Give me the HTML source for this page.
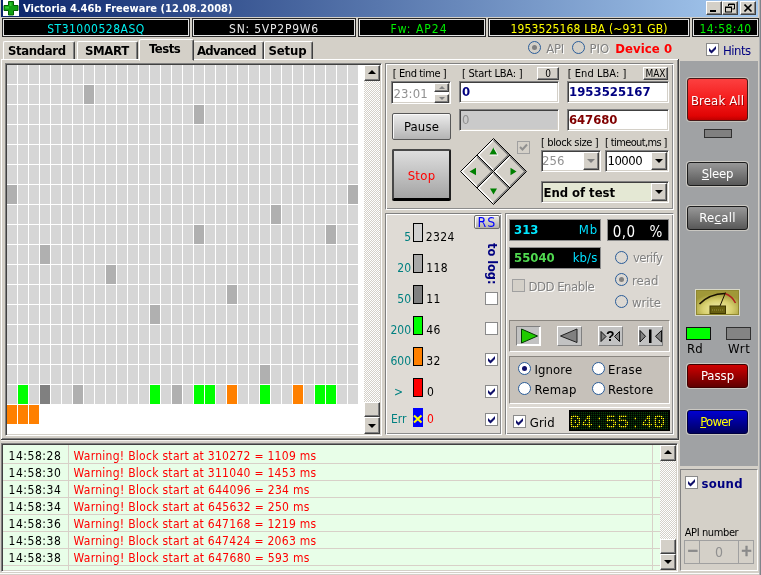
<!DOCTYPE html>
<html><head><meta charset="utf-8"><title>Victoria 4.46b Freeware (12.08.2008)</title>
<style>
html,body{margin:0;padding:0;}
body{width:761px;height:575px;overflow:hidden;background:#d4d0c8;position:relative;font-family:"DejaVu Sans Condensed","Liberation Sans",sans-serif;font-size:11px;color:#000;}
.a{position:absolute;box-sizing:border-box;white-space:nowrap;}
.t{position:absolute;white-space:nowrap;line-height:1;}
/* title */
#title{left:1px;top:0;width:757px;height:17px;background:linear-gradient(90deg,#0a246a 0%,#a6caf0 100%);}
.wb{position:absolute;top:1px;width:16px;height:14px;box-sizing:border-box;background:#d4d0c8;border:1px solid;border-color:#fff #404040 #404040 #fff;box-shadow:inset -1px -1px 0 #808080;}
.info{position:absolute;top:18px;height:19px;box-sizing:border-box;background:#000;border:1px solid #282828;box-shadow:inset 0 0 0 1px #e4e4e4;text-align:center;font-size:12px;line-height:20px;}
.tab{position:absolute;top:41px;height:19px;box-sizing:border-box;border:1px solid;border-color:#fff #404040 transparent #fff;border-radius:2px 2px 0 0;box-shadow:inset -1px 0 0 #808080;font-weight:bold;font-size:13px;line-height:17px;text-align:center;}
.sunk{border:1px solid;border-color:#808080 #fff #fff #808080;box-shadow:inset 1px 1px 0 #404040,inset -1px -1px 0 #d4d0c8;}
.grp{border:1px solid;border-color:#808080 #fff #fff #808080;box-shadow:inset 1px 1px 0 #fff, 1px 1px 0 #808080;}

.btn{background:#d4d0c8;border:1px solid;border-color:#fff #404040 #404040 #fff;box-shadow:inset -1px -1px 0 #808080;}
.edit{background:#fff;border:1px solid;border-color:#808080 #fff #fff #808080;box-shadow:inset 1px 1px 0 #404040, inset -1px -1px 0 #d4d0c8;}
.track{background:repeating-conic-gradient(#fff 0 25%,#d4d0c8 0 50%) 0 0/2px 2px;}
.arr{position:absolute;width:0;height:0;border:4px solid transparent;}
.frame{border:1px solid;border-color:#808080 #fff #fff #808080;box-shadow:inset 1px 1px 0 #fff,inset -1px -1px 0 #8c8c8c;}
.lbl{position:absolute;white-space:nowrap;font-size:11px;line-height:13px;}
.f13{font-size:13px;line-height:15px;}
.f12{font-size:12px;line-height:14px;}
.radio{position:absolute;width:13px;height:13px;box-sizing:border-box;border-radius:50%;background:#fff;border:1.4px solid #2a5c98;}
.radio.on::after{content:"";position:absolute;left:2.6px;top:2.6px;width:5px;height:5px;border-radius:50%;background:#10106a;}
.chk{position:absolute;width:13px;height:13px;box-sizing:border-box;background:#fff;border:1px solid #8a8a8a;}
.dis{color:#808080;text-shadow:1px 1px 0 #fff;}
.gbtn{border:1px solid #1c1c1c;border-radius:3px;color:#fff;text-align:center;font-size:13px;box-shadow:0 0 0 1px rgba(216,212,204,0.75);}
.led{background:#000;border:1px solid #8c8c8c;}
.grp1{border:1px solid;border-color:#8a8680 #fff #fff #8a8680;background:#c6c1ba;}
</style></head><body>
<div id="wrap" style="position:absolute;left:0;top:0;width:761px;height:575px;will-change:transform">
<!-- title bar -->
<div class="a" id="title"></div>
<div class="a" style="left:3px;top:0px;width:16px;height:16px;background:#fff"></div>
<svg class="a" style="left:3px;top:0px" width="16" height="16" viewBox="0 0 16 16"><path d="M5.5 1.5h5v4h4.5v5h-4.5v4.5h-5v-4.5h-4.5v-5h4.5z" fill="#10a010" stroke="#006000" stroke-width="1"></path><path d="M6.5 2.5h2v3.5h-2zM2 6.5h4v2h-4z" fill="#30c830"></path></svg>
<div class="t" style="left: 23px; top: 3px; font-weight: bold; font-size: 11px; color: rgb(255, 255, 255); letter-spacing: 0.03px;">Victoria 4.46b Freeware (12.08.2008)</div>
<div class="wb" style="left:706px"><div class="a" style="left:3px;top:8px;width:6px;height:2px;background:#000"></div></div>
<div class="wb" style="left:722px"><svg class="a" style="left:2px;top:1px" width="10" height="10" viewBox="0 0 10 10"><path d="M3.5 3V1h6v5H7.5" fill="none" stroke="#000" stroke-width="1"></path><path d="M3 1.5h7" stroke="#000" stroke-width="1"></path><rect x="0.5" y="4" width="6" height="5" fill="none" stroke="#000" stroke-width="1"></rect><path d="M0 4.5h7" stroke="#000" stroke-width="1"></path></svg></div>
<div class="wb" style="left:740px"><svg class="a" style="left:3px;top:2px" width="9" height="8" viewBox="0 0 9 8"><path d="M0.5 0.5l7 7M7.5 0.5l-7 7" stroke="#000" stroke-width="1.6" fill="none"></path></svg></div>
<div class="a" style="left:758px;top:0;width:3px;height:575px;background:#d4d0c8;border-right:1px solid #80848a;box-shadow:inset -1px 0 0 #b0b2b4"></div>
<div class="a" style="left:0;top:573px;width:759px;height:1px;background:#fbfbfa"></div>
<!-- info bar -->
<div class="info" style="left: 2px; width: 188px; color: rgb(0, 240, 240); letter-spacing: 0.5px;">ST31000528ASQ</div>
<div class="info" style="left: 192px; width: 164px; color: rgb(232, 232, 232); letter-spacing: 0.77px;">SN: 5VP2P9W6</div>
<div class="info" style="left: 358px; width: 128px; color: rgb(0, 240, 0); letter-spacing: 1px; padding-right:6px;">Fw: AP24</div>
<div class="info" style="left: 488px; width: 202px; color: rgb(255, 255, 0); letter-spacing: 0.15px;">1953525168 LBA (~931 GB)</div>
<div class="info" style="left: 692px; width: 67px; color: rgb(0, 240, 0); letter-spacing: 0.46px;">14:58:40</div>
<!-- tabs -->
<div class="tab" style="left: 3px; width: 72px; letter-spacing: -0.37px; text-align:left; padding-left:4px;">Standard</div>
<div class="tab" style="left: 77px; width: 61px; letter-spacing: -0.35px; text-align:left; padding-left:7px;">SMART</div>
<div class="tab" style="left: 139px; width: 55px; top: 39px; height: 22px; background: rgb(212, 208, 200); z-index: 2; letter-spacing: -0.5px; text-align:left; padding-left:9px;">Tests</div>
<div class="tab" style="left: 193px; width: 71px; letter-spacing: -0.71px; text-align:left; padding-left:3px;">Advanced</div>
<div class="tab" style="left: 264px; width: 49px; letter-spacing: -0.12px; text-align:left; padding-left:3.5px;">Setup</div>
<!-- grid -->
<div class="a sunk" id="gridbox" style="left:5px;top:63px;width:377px;height:373px;background:#fff"></div>
<div class="a" style="left:7px;top:65px;width:352px;height:340px;background:repeating-linear-gradient(90deg,#d6d6d6 0,#d6d6d6 10px,#fff 10px,#fff 11px)"></div>
<div class="a" style="left:7px;top:65px;width:352px;height:340px;background:repeating-linear-gradient(180deg,transparent 0,transparent 19px,#fff 19px,#fff 20px)"></div>
<div class="a" style="left:84px;top:85px;width:10px;height:19px;background:#b0b0b0"></div>
<div class="a" style="left:194px;top:105px;width:10px;height:19px;background:#b0b0b0"></div>
<div class="a" style="left:7px;top:185px;width:10px;height:19px;background:#b0b0b0"></div>
<div class="a" style="left:348px;top:185px;width:10px;height:19px;background:#b0b0b0"></div>
<div class="a" style="left:271px;top:205px;width:10px;height:19px;background:#b0b0b0"></div>
<div class="a" style="left:194px;top:225px;width:10px;height:19px;background:#b0b0b0"></div>
<div class="a" style="left:326px;top:225px;width:10px;height:19px;background:#b0b0b0"></div>
<div class="a" style="left:40px;top:245px;width:10px;height:19px;background:#b0b0b0"></div>
<div class="a" style="left:106px;top:265px;width:10px;height:19px;background:#b0b0b0"></div>
<div class="a" style="left:227px;top:285px;width:10px;height:19px;background:#b0b0b0"></div>
<div class="a" style="left:150px;top:305px;width:10px;height:19px;background:#b0b0b0"></div>
<div class="a" style="left:260px;top:365px;width:10px;height:19px;background:#b0b0b0"></div>
<div class="a" style="left:18px;top:385px;width:10px;height:19px;background:#00ff00"></div>
<div class="a" style="left:40px;top:385px;width:10px;height:19px;background:#808080"></div>
<div class="a" style="left:73px;top:385px;width:10px;height:19px;background:#b0b0b0"></div>
<div class="a" style="left:150px;top:385px;width:10px;height:19px;background:#00ff00"></div>
<div class="a" style="left:172px;top:385px;width:10px;height:19px;background:#b0b0b0"></div>
<div class="a" style="left:194px;top:385px;width:10px;height:19px;background:#00ff00"></div>
<div class="a" style="left:205px;top:385px;width:10px;height:19px;background:#00ff00"></div>
<div class="a" style="left:227px;top:385px;width:10px;height:19px;background:#ff8000"></div>
<div class="a" style="left:260px;top:385px;width:10px;height:19px;background:#00ff00"></div>
<div class="a" style="left:293px;top:385px;width:10px;height:19px;background:#ff8000"></div>
<div class="a" style="left:315px;top:385px;width:10px;height:19px;background:#00ff00"></div>
<div class="a" style="left:326px;top:385px;width:10px;height:19px;background:#00ff00"></div>
<div class="a" style="left:7px;top:405px;width:10px;height:19px;background:#ff8000"></div>
<div class="a" style="left:18px;top:405px;width:10px;height:19px;background:#ff8000"></div>
<div class="a" style="left:29px;top:405px;width:10px;height:19px;background:#ff8000"></div>
<div class="a" style="left:40px;top:405px;width:324px;height:19px;background:#fff"></div>

<!-- grid scrollbar -->
<div class="a track" style="left:364px;top:65px;width:16px;height:369px"></div>
<div class="a btn" style="left:364px;top:65px;width:16px;height:16px"><div class="arr" style="left:3px;top:0px;border-bottom-color:#000"></div></div>
<div class="a btn" style="left:364px;top:402px;width:16px;height:15px"></div>
<div class="a btn" style="left:364px;top:417px;width:16px;height:17px"><div class="arr" style="left:3px;top:6px;border-top-color:#000"></div></div>
<!-- tab page top line -->
<div class="a" style="left:1px;top:59px;width:677px;height:1px;background:#fff"></div>
<!-- panel 1 -->
<div class="a frame" style="left:385px;top:63px;width:289px;height:147px"></div>
<div class="lbl" style="left: 392.8px; top: 67px; letter-spacing: -0.4px;">[ End time ]</div>
<div class="a edit" style="left:391px;top:81px;width:60px;height:23px"></div>
<div class="lbl f13" style="left: 393.5px; top: 86px; color: rgb(144, 144, 144); letter-spacing: 0.12px;">23:01</div>
<div class="a btn" style="left:434px;top:83px;width:15px;height:9px"><div class="arr" style="left:4px;top:-1px;border-width:3px;border-bottom-color:#808080"></div></div>
<div class="a btn" style="left:434px;top:94px;width:15px;height:9px"><div class="arr" style="left:4px;top:2px;border-width:3px;border-top-color:#808080"></div></div>
<div class="lbl" style="left: 462px; top: 67px; letter-spacing: -0.23px;">[ Start LBA: ]</div>
<div class="a btn" style="left:537px;top:67px;width:22px;height:13px;font-size:10px;line-height:11px;text-align:center">0</div>
<div class="a edit" style="left:459px;top:81px;width:100px;height:22px"></div>
<div class="lbl f13" style="left:462px;top:84px;color:#000080;font-weight:bold">0</div>
<div class="a edit" style="left:459px;top:109px;width:100px;height:22px;background:#cacaca"></div>
<div class="lbl f13" style="left:462px;top:112px;color:#909090;">0</div>
<div class="lbl" style="left: 567.7px; top: 67px; letter-spacing: 0.05px;">[ End LBA: ]</div>
<div class="a btn" style="left:643px;top:67px;width:25px;height:13px;font-size:10px;line-height:11px;text-align:center">MAX</div>
<div class="a edit" style="left:567px;top:81px;width:102px;height:22px"></div>
<div class="lbl f13" style="left: 569px; top: 84px; color: rgb(0, 0, 128); font-weight: bold; letter-spacing: 0.02px;">1953525167</div>
<div class="a edit" style="left:567px;top:109px;width:102px;height:22px"></div>
<div class="lbl f13" style="left: 569px; top: 112px; color: rgb(128, 0, 0); font-weight: bold; letter-spacing: -0.08px;">647680</div>
<div class="a" style="left:392px;top:113px;width:59px;height:27px;background:linear-gradient(#ececec,#b4b4b4);border:1px solid #585858;border-radius:2px;box-shadow:inset 1px 1px 0 #fafafa;text-align:center;font-size:13px;line-height:25px;letter-spacing:0.17px;">Pause</div>
<div class="a" style="left:392px;top:149px;width:59px;height:52px;background:linear-gradient(#dedede,#a4a4a4);border:2px solid;border-color:#484848 #202020 #000 #484848;border-bottom-width:3px;border-radius:2px;text-align:center;font-size:13px;line-height:50px;color:#ff0000;letter-spacing:0.27px;">Stop</div>
<div class="lbl" style="left: 541px; top: 136px; letter-spacing: -0.38px;">[ block size ]</div>
<div class="lbl" style="left: 605px; top: 136px; letter-spacing: -0.62px;">[ timeout,ms ]</div>
<div class="a edit" style="left:541px;top:150px;width:60px;height:22px"></div>
<div class="lbl f13" style="left: 542px; top: 153px; color: rgb(144, 144, 144); letter-spacing: 0px;">256</div>
<div class="a btn" style="left:583px;top:152px;width:16px;height:18px"><div class="arr" style="left:3px;top:6px;border-top-color:#808080"></div></div>
<div class="a edit" style="left:605px;top:150px;width:64px;height:22px"></div>
<div class="lbl f13" style="left: 607.4px; top: 153px; letter-spacing: -0.45px;">10000</div>
<div class="a btn" style="left:651px;top:152px;width:16px;height:18px"><div class="arr" style="left:3px;top:6px;border-top-color:#000"></div></div>
<div class="a edit" style="left:541px;top:181px;width:128px;height:22px;background:#e4e8d4"></div>
<div class="lbl f13" style="left: 543.5px; top: 185px; font-weight: bold; letter-spacing: -0.05px;">End of test</div>
<div class="a btn" style="left:651px;top:183px;width:16px;height:18px"><div class="arr" style="left:3px;top:6px;border-top-color:#000"></div></div>
<div class="chk" style="left:517px;top:141px;border-color:#a0a0a0;background:#d4d0c8"></div>

<!-- diamond -->
<svg class="a" style="left:458px;top:137px" width="72" height="70" viewBox="0 0 72 70"><g transform="translate(35.5,34.5)"><polygon points="0,-33.0 16.5,-16.5 0,0.0 -16.5,-16.5" fill="#d4d0c8" stroke="#000" stroke-width="1"></polygon><polyline points="0,-31.4 -14.9,-16.5 0,-1.5999999999999996" fill="none" stroke="#fff" stroke-width="1.3"></polyline><polyline points="0,-31.4 14.9,-16.5 0,-1.5999999999999996" fill="none" stroke="#707070" stroke-width="1.3"></polyline><polygon points="-16.5,-16.5 0.0,0 -16.5,16.5 -33.0,0" fill="#d4d0c8" stroke="#000" stroke-width="1"></polygon><polyline points="-16.5,-14.9 -31.4,0 -16.5,14.9" fill="none" stroke="#fff" stroke-width="1.3"></polyline><polyline points="-16.5,-14.9 -1.5999999999999996,0 -16.5,14.9" fill="none" stroke="#707070" stroke-width="1.3"></polyline><polygon points="16.5,-16.5 33.0,0 16.5,16.5 0.0,0" fill="#d4d0c8" stroke="#000" stroke-width="1"></polygon><polyline points="16.5,-14.9 1.5999999999999996,0 16.5,14.9" fill="none" stroke="#fff" stroke-width="1.3"></polyline><polyline points="16.5,-14.9 31.4,0 16.5,14.9" fill="none" stroke="#707070" stroke-width="1.3"></polyline><polygon points="0,0.0 16.5,16.5 0,33.0 -16.5,16.5" fill="#d4d0c8" stroke="#000" stroke-width="1"></polygon><polyline points="0,1.5999999999999996 -14.9,16.5 0,31.4" fill="none" stroke="#fff" stroke-width="1.3"></polyline><polyline points="0,1.5999999999999996 14.9,16.5 0,31.4" fill="none" stroke="#707070" stroke-width="1.3"></polyline><polygon points="0,-24 4,-17 -4,-17" fill="#008000"></polygon><polygon points="0,23 3.5,17 -3.5,17" fill="#008000"></polygon><polygon points="-24,0 -17.5,-3.7 -17.5,3.7" fill="#008000"></polygon><polygon points="23,0 17,-3.7 17,3.7" fill="#008000"></polygon><path d="M-4,-16.3 h8.5 l-4,-7" fill="none" stroke="#fff" stroke-width="0.8"></path></g></svg>
<svg class="a" style="left:519px;top:143px" width="9" height="9" viewBox="0 0 9 9"><path d="M1 4 L3.5 6.5 L8 1.5" fill="none" stroke="#909090" stroke-width="2"></path></svg>
<!-- panel 2 legend -->
<div class="a frame" style="left:385px;top:213px;width:117px;height:222px;background:#dfdbd5"></div>
<div class="a" style="left: 474px; top: 215px; width: 26px; height: 14px; border: 1px solid rgb(108, 108, 108); border-radius: 2px; background: linear-gradient(rgb(236, 235, 230), rgb(180, 176, 168)); box-shadow: rgb(250, 250, 250) 1px 1px 0px inset; color: rgb(0, 0, 255); font-size: 14px; line-height: 12px; text-align: center; letter-spacing: 1.2px;">RS</div>
<div class="lbl f12" style="left:386px;width:25px;text-align:right;top:230px;color:#008080">5</div><div class="a" style="left:413px;top:223px;width:10px;height:19px;background:#d0d0d0;border:1px solid #000"></div><div class="lbl f12" style="left: 425.7px; top: 230px; letter-spacing: 0.43px;">2324</div>
<div class="lbl f12" style="left:386px;width:25px;text-align:right;top:261px;color:#008080">20</div><div class="a" style="left:413px;top:254px;width:10px;height:19px;background:#a8a8a8;border:1px solid #000"></div><div class="lbl f12" style="left: 426.3px; top: 261px; letter-spacing: 0.35px;">118</div>
<div class="lbl f12" style="left:386px;width:25px;text-align:right;top:292px;color:#008080">50</div><div class="a" style="left:413px;top:285px;width:10px;height:19px;background:#808080;border:1px solid #000"></div><div class="lbl f12" style="left: 426.3px; top: 292px; letter-spacing: 0.4px;">11</div>
<div class="lbl f12" style="left:386px;width:25px;text-align:right;top:323px;color:#008080">200</div><div class="a" style="left:413px;top:316px;width:10px;height:19px;background:#00ff00;border:1px solid #000"></div><div class="lbl f12" style="left: 426.3px; top: 323px; letter-spacing: 0.4px;">46</div>
<div class="lbl f12" style="left:386px;width:25px;text-align:right;top:354px;color:#008080">600</div><div class="a" style="left:413px;top:347px;width:10px;height:19px;background:#ff8000;border:1px solid #000"></div><div class="lbl f12" style="left: 426.3px; top: 354px; letter-spacing: 0.4px;">32</div>
<div class="lbl f12" style="left:394px;top:385px;color:#008080">&gt;</div><div class="a" style="left:413px;top:378px;width:10px;height:19px;background:#ff0000;border:1px solid #000"></div><div class="lbl f12" style="left:427px;top:385px">0</div>
<div class="lbl f12" style="left: 391px; top: 412px; color: rgb(0, 128, 128); letter-spacing: 0px;">Err</div>
<div class="a" style="left:413px;top:408px;width:10px;height:19px;background:#0000ff"></div>
<svg class="a" style="left:413px;top:414px" width="10" height="10" viewBox="0 0 10 10"><path d="M1 1.5 L8.5 8.5 M8.5 1.5 L1 8.5" stroke="#ffff00" stroke-width="2" fill="none"></path></svg>
<div class="lbl f12" style="left:427px;top:412px;color:#ff0000">0</div>
<div class="lbl f12" style="left:485px;top:243px;color:#000080;font-weight:bold;font-size:12.6px;transform-origin:0 0;transform:translate(14px,0) rotate(90deg)">to log:</div>
<div class="chk" style="left:485px;top:292px"></div>
<div class="chk" style="left:485px;top:322px"></div>
<div class="chk" style="left:485px;top:353px"></div><svg class="a" style="left:487px;top:355px" width="9" height="9" viewBox="0 0 9 9"><path d="M1 3 L3.5 5.5 L8 1 L8 4 L3.5 8.5 L1 6 Z" fill="#10106a"></path></svg>
<div class="chk" style="left:485px;top:385px"></div><svg class="a" style="left:487px;top:387px" width="9" height="9" viewBox="0 0 9 9"><path d="M1 3 L3.5 5.5 L8 1 L8 4 L3.5 8.5 L1 6 Z" fill="#10106a"></path></svg>
<div class="chk" style="left:485px;top:413px"></div><svg class="a" style="left:487px;top:415px" width="9" height="9" viewBox="0 0 9 9"><path d="M1 3 L3.5 5.5 L8 1 L8 4 L3.5 8.5 L1 6 Z" fill="#10106a"></path></svg>
<!-- panel 3 -->
<div class="a frame" style="left:505px;top:213px;width:169px;height:222px;background:#dcd8d2"></div>
<div class="a led" style="left:509px;top:219px;width:92px;height:22px"></div>
<div class="lbl f13" style="left: 514px; top: 222px; color: rgb(0, 232, 255); font-weight:bold; letter-spacing: 0px;">313</div>
<div class="lbl f13" style="left: 578.7px; top: 222px; color: rgb(0, 224, 255); letter-spacing: 0.9px;">Mb</div>
<div class="a led" style="left:607px;top:219px;width:62px;height:22px"></div>
<div class="lbl" style="left: 612.7px; top: 224px; color: rgb(255, 255, 255); font-size: 15px; line-height: 17px; letter-spacing: 0.5px;">0,0</div>
<div class="lbl" style="left: 649.5px; top: 224px; color: rgb(255, 255, 255); font-size: 15px; line-height: 17px;">%</div>
<div class="a led" style="left:509px;top:247px;width:92px;height:22px"></div>
<div class="lbl f13" style="left: 514px; top: 250px; color: rgb(80, 216, 80); font-weight:bold; letter-spacing: 0px;">55040</div>
<div class="lbl f13" style="left: 572.7px; top: 250px; color: rgb(0, 224, 255); letter-spacing: 0.1px;">kb/s</div>
<div class="chk" style="left:512px;top:279px;border-color:#a0a0a0;background:#d4d0c8"></div>
<div class="lbl f13 dis" style="left: 528.5px; top: 279px; letter-spacing: -0.5px;">DDD Enable</div>
<div class="radio" style="left:615px;top:251px;background:#dcd8d2"></div><div class="lbl f13 dis" style="left: 633px; top: 250px; letter-spacing: -0.6px;">verify</div>
<div class="radio" style="left:615px;top:273px;background:#dcd8d2"></div><div class="a" style="left:619px;top:277px;width:5px;height:5px;border-radius:50%;background:#808080"></div><div class="lbl f13 dis" style="left: 632px; top: 273px; letter-spacing: 0px;">read</div>
<div class="radio" style="left:615px;top:295px;background:#dcd8d2"></div><div class="lbl f13 dis" style="left: 632px; top: 295px; letter-spacing: -0.12px;">write</div>
<div class="a grp1" style="left:509px;top:320px;width:161px;height:32px"></div>
<div class="a" style="left:516px;top:326px;width:25px;height:20px;background:#c2c2c2;border:1px solid;border-color:#808080 #fff #fff #808080;box-shadow:inset -1px -1px 0 #fff"></div>
<div class="a" style="left:557px;top:326px;width:25px;height:20px;background:#c2c2c2;border:1px solid;border-color:#fff #808080 #808080 #fff"></div>
<div class="a" style="left:598px;top:326px;width:25px;height:20px;background:#c2c2c2;border:1px solid;border-color:#fff #808080 #808080 #fff"></div>
<div class="a" style="left:638px;top:326px;width:25px;height:20px;background:#c2c2c2;border:1px solid;border-color:#fff #808080 #808080 #fff"></div>
<svg class="a" style="left:516px;top:326px" width="148" height="20" viewBox="0 0 148 20">
<polygon points="5.5,3 21.5,10 5.5,17" fill="#20cc00" stroke="#003800" stroke-width="1"></polygon>
<polygon points="61,3 44.5,10 61,16.5" fill="#808080" stroke="#202020" stroke-width="1"></polygon>
<polygon points="85,5.5 90,10.5 85,15.5" fill="#808080" stroke="#101010" stroke-width="1"></polygon>
<polygon points="103.5,5.5 98.5,10.5 103.5,15.5" fill="#808080" stroke="#101010" stroke-width="1"></polygon>
<text x="94.2" y="15.2" font-size="14" font-weight="bold" text-anchor="middle" font-family="Liberation Sans, sans-serif">?</text>
<polygon points="124,4.5 129.5,10.3 124,16" fill="#808080" stroke="#101010" stroke-width="1"></polygon>
<polygon points="145.5,4.5 139.5,10.3 145.5,16" fill="#808080" stroke="#101010" stroke-width="1"></polygon>
<rect x="133" y="3.5" width="2.5" height="13.5" fill="#000"></rect>
</svg>
<div class="a grp1" style="left:509px;top:356px;width:161px;height:48px"></div>
<div class="radio on" style="left:518px;top:362px"></div><div class="lbl f13" style="left: 534.5px; top: 362px; letter-spacing: 0.1px;">Ignore</div>
<div class="radio" style="left:518px;top:382px"></div><div class="lbl f13" style="left: 534.5px; top: 382px; letter-spacing: 0.28px;">Remap</div>
<div class="radio" style="left:592px;top:362px"></div><div class="lbl f13" style="left: 608px; top: 362px; letter-spacing: 0.38px;">Erase</div>
<div class="radio" style="left:592px;top:382px"></div><div class="lbl f13" style="left: 608px; top: 382px; letter-spacing: 0.17px;">Restore</div>
<div class="a" style="left:509px;top:407px;width:161px;height:1px;background:#fff"></div>
<div class="chk" style="left:513px;top:415px"></div><svg class="a" style="left:515px;top:417px" width="9" height="9" viewBox="0 0 9 9"><path d="M1 3 L3.5 5.5 L8 1 L8 4 L3.5 8.5 L1 6 Z" fill="#10106a"></path></svg>
<div class="lbl f13" style="left: 529.8px; top: 415px; letter-spacing: 0.07px;">Grid</div>
<div class="a" style="left:569px;top:410px;width:101px;height:21px;background:#000"></div>
<div class="lbl" style="left:569px;top:413px;width:99px;height:17px;overflow:hidden;color:#ffff00;font-family:'Liberation Mono','DejaVu Sans Mono',monospace;font-size:20px;line-height:19px;letter-spacing:0px;font-weight:normal;background:#000;filter:brightness(1.6) contrast(9)">04:55:40</div>
<div class="a" style="left:571px;top:412px;width:97px;height:18px;background:#083c08;mix-blend-mode:lighten"></div>
<div class="a" style="left:569px;top:410px;width:101px;height:21px;border:1px solid #000;background:repeating-linear-gradient(90deg,rgba(0,0,0,.72) 0,rgba(0,0,0,.72) 1px,transparent 1px,transparent 2px),repeating-linear-gradient(180deg,rgba(0,0,0,.72) 0,rgba(0,0,0,.72) 1px,transparent 1px,transparent 2px)"></div>

<!-- splitter -->
<div class="a" style="left:1px;top:438px;width:678px;height:1px;background:#808080"></div>
<div class="a" style="left:1px;top:439px;width:678px;height:1px;background:#404040"></div>
<div class="a" style="left:1px;top:440px;width:678px;height:1px;background:#f4f2ee"></div>
<div class="a" style="left:677px;top:60px;width:1px;height:379px;background:#808080"></div>
<div class="a" style="left:678px;top:59px;width:1px;height:381px;background:#404040"></div>
<div class="a" style="left:1px;top:59px;width:1px;height:380px;background:#fff"></div>
<!-- side panel -->
<div class="a" style="left:680px;top:61px;width:78px;height:405px;background:#a0a2a4"></div>
<div class="a gbtn" style="left: 687px; top: 78px; width: 61px; height: 43px; background: linear-gradient(rgb(252, 64, 64), rgb(244, 28, 28) 50%, rgb(224, 4, 4) 90%, rgb(190,0,0)); border-color: rgb(72, 24, 24); box-shadow: 0 0 0 1px #c4c0b8; line-height: 43px; text-shadow: rgb(160, 0, 0) 1px 1px 0px; letter-spacing: 0.15px;">Break All</div>
<div class="a" style="left:704px;top:129px;width:28px;height:9px;background:#808080;border:1px solid #303030"></div>
<div class="a gbtn" style="left: 687px; top: 162px; width: 61px; height: 24px; background: linear-gradient(rgb(152, 152, 152), rgb(88, 88, 88)); line-height: 21px; letter-spacing: -0.25px;"><u>S</u>leep</div>
<div class="a gbtn" style="left: 687px; top: 206px; width: 61px; height: 24px; background: linear-gradient(rgb(152, 152, 152), rgb(88, 88, 88)); line-height: 21px; letter-spacing: 0.28px;">Re<u>c</u>all</div>
<!-- gauge -->
<svg class="a" style="left:695px;top:289px" width="45" height="27" viewBox="0 0 45 27">
<defs><radialGradient id="gg" cx="0.5" cy="0.75" r="0.6"><stop offset="0" stop-color="#f4f0b0"></stop><stop offset="0.55" stop-color="#d8d070"></stop><stop offset="1" stop-color="#a09838"></stop></radialGradient></defs>
<rect x="0.5" y="0.5" width="44" height="26" fill="url(#gg)" stroke="#d8d8c8"></rect>
<rect x="1.5" y="1.5" width="42" height="24" fill="none" stroke="#908830" stroke-width="1"></rect>
<path d="M4.5 15 Q14 5 30 4.5" fill="none" stroke="#181000" stroke-width="1.6"></path>
<path d="M30 4.5 Q37 7 40.5 14" fill="none" stroke="#b02020" stroke-width="1.5"></path>
<line x1="25" y1="17" x2="30.5" y2="3.5" stroke="#181000" stroke-width="1"></line>
<rect x="15" y="17" width="15.5" height="7.5" fill="#686010" stroke="#403800" stroke-width="1"></rect>
<path d="M17 21h12" stroke="#989040" stroke-width="1" stroke-dasharray="1 1"></path>
</svg>
<div class="a" style="left:686px;top:327px;width:25px;height:13px;background:#00ff00;border:1px solid #101010"></div>
<div class="a" style="left:726px;top:327px;width:25px;height:13px;background:#848484;border:1px solid #303030"></div>
<div class="lbl f13" style="left: 687px; top: 341px; letter-spacing: 0px;">Rd</div>
<div class="lbl f13" style="left: 728px; top: 341px; letter-spacing: 0.75px;">Wrt</div>
<div class="a gbtn" style="left: 687px; top: 364px; width: 61px; height: 24px; background: linear-gradient(rgb(208, 0, 0), rgb(96, 0, 0)); border-color: rgb(64, 0, 0); line-height: 21px; letter-spacing: 0px;">Passp</div>
<div class="a gbtn" style="left: 687px; top: 410px; width: 61px; height: 24px; background: linear-gradient(rgb(0, 0, 208), rgb(0, 0, 96)); border-color: rgb(0, 0, 64); line-height: 21px; color: rgb(255, 255, 0); letter-spacing: -0.75px; padding-right: 3px;"><u>P</u>ower</div>
<!-- sound panel -->
<div class="a" style="left:680px;top:469px;width:78px;height:102px;border:1px solid;border-color:#848484 #fff #fff #848484"></div>
<div class="chk" style="left:685px;top:476px"></div><svg class="a" style="left:687px;top:478px" width="9" height="9" viewBox="0 0 9 9"><path d="M1 3 L3.5 5.5 L8 1 L8 4 L3.5 8.5 L1 6 Z" fill="#10106a"></path></svg>
<div class="lbl f13" style="left: 701.6px; top: 476px; color: rgb(0, 0, 128); font-weight: bold; letter-spacing: 0.22px;">sound</div>
<div class="lbl" style="left: 684.7px; top: 526px; letter-spacing: -0.38px;">API number</div>
<div class="a" style="left:684px;top:540px;width:70px;height:24px;border:1px solid #a0a0a0;background:#d4d0c8"></div>
<div class="a" style="left:699px;top:540px;width:1px;height:24px;background:#a0a0a0"></div>
<div class="a" style="left:738px;top:540px;width:1px;height:24px;background:#a0a0a0"></div>
<div class="lbl" style="left:686.5px;top:543px;font-size:16px;line-height:16px;color:#8a8a8a;font-weight:bold;-webkit-text-stroke:0.4px #8a8a8a">−</div>
<div class="lbl" style="left:740.5px;top:543px;font-size:16px;line-height:16px;color:#8a8a8a;font-weight:bold;-webkit-text-stroke:0.4px #8a8a8a">+</div>
<div class="lbl f13" style="left:715px;top:545px;color:#909090;font-size:14px">0</div>
<!-- log -->
<div class="a sunk" style="left:1px;top:443px;width:677px;height:129px;background:#e8fee8"></div>
<div class="lbl f12" style="left: 8.5px; top: 449px; letter-spacing: 0.54px;">14:58:28</div><div class="lbl f12" style="left: 73.6px; top: 449px; color: rgb(255, 0, 0); letter-spacing: 0.28px;">Warning! Block start at 310272 = 1109 ms</div><div class="a" style="left:3px;top:463px;width:657px;height:1px;background:#d8d0c8"></div>
<div class="lbl f12" style="left: 8.5px; top: 466px; letter-spacing: 0.54px;">14:58:30</div><div class="lbl f12" style="left: 73.6px; top: 466px; color: rgb(255, 0, 0); letter-spacing: 0.28px;">Warning! Block start at 311040 = 1453 ms</div><div class="a" style="left:3px;top:480px;width:657px;height:1px;background:#d8d0c8"></div>
<div class="lbl f12" style="left: 8.5px; top: 483px; letter-spacing: 0.54px;">14:58:34</div><div class="lbl f12" style="left: 73.6px; top: 483px; color: rgb(255, 0, 0); letter-spacing: 0.29px;">Warning! Block start at 644096 = 234 ms</div><div class="a" style="left:3px;top:497px;width:657px;height:1px;background:#d8d0c8"></div>
<div class="lbl f12" style="left: 8.5px; top: 500px; letter-spacing: 0.54px;">14:58:34</div><div class="lbl f12" style="left: 73.6px; top: 500px; color: rgb(255, 0, 0); letter-spacing: 0.29px;">Warning! Block start at 645632 = 250 ms</div><div class="a" style="left:3px;top:514px;width:657px;height:1px;background:#d8d0c8"></div>
<div class="lbl f12" style="left: 8.5px; top: 517px; letter-spacing: 0.54px;">14:58:36</div><div class="lbl f12" style="left: 73.6px; top: 517px; color: rgb(255, 0, 0); letter-spacing: 0.28px;">Warning! Block start at 647168 = 1219 ms</div><div class="a" style="left:3px;top:531px;width:657px;height:1px;background:#d8d0c8"></div>
<div class="lbl f12" style="left: 8.5px; top: 534px; letter-spacing: 0.54px;">14:58:38</div><div class="lbl f12" style="left: 73.6px; top: 534px; color: rgb(255, 0, 0); letter-spacing: 0.28px;">Warning! Block start at 647424 = 2063 ms</div><div class="a" style="left:3px;top:548px;width:657px;height:1px;background:#d8d0c8"></div>
<div class="lbl f12" style="left: 8.5px; top: 551px; letter-spacing: 0.54px;">14:58:38</div><div class="lbl f12" style="left: 73.6px; top: 551px; color: rgb(255, 0, 0); letter-spacing: 0.29px;">Warning! Block start at 647680 = 593 ms</div><div class="a" style="left:3px;top:565px;width:657px;height:1px;background:#d8d0c8"></div>
<div class="a" style="left:68px;top:445px;width:1px;height:125px;background:#d8d0c8"></div>
<div class="a" style="left:652px;top:445px;width:1px;height:125px;background:#d8d0c8"></div>
<div class="a track" style="left:660px;top:445px;width:16px;height:125px"></div>
<div class="a btn" style="left:660px;top:445px;width:16px;height:16px"><div class="arr" style="left:3px;top:0px;border-bottom-color:#000"></div></div>
<div class="a btn" style="left:660px;top:539px;width:16px;height:15px"></div>
<div class="a btn" style="left:660px;top:554px;width:16px;height:16px"><div class="arr" style="left:3px;top:5px;border-top-color:#000"></div></div>
<!-- top right -->
<div class="radio" style="left:528px;top:41px;background:#d4d0c8"></div><div class="a" style="left:532px;top:45px;width:5px;height:5px;border-radius:50%;background:#808080"></div>
<div class="lbl f13 dis" style="left: 546.3px; top: 41px; letter-spacing: -0.25px;">API</div>
<div class="radio" style="left:572px;top:41px;background:#d4d0c8"></div>
<div class="lbl f13 dis" style="left: 589.4px; top: 41px; letter-spacing: 0px;">PIO</div>
<div class="lbl" style="left: 615.3px; top: 40px; font-size: 13px; line-height: 17px; font-weight: bold; color: rgb(255, 0, 0); letter-spacing: 0.07px;">Device 0</div>
<div class="chk" style="left:706px;top:43px"></div><svg class="a" style="left:708px;top:45px" width="9" height="9" viewBox="0 0 9 9"><path d="M1 3 L3.5 5.5 L8 1 L8 4 L3.5 8.5 L1 6 Z" fill="#10106a"></path></svg>
<div class="lbl f13" style="left: 723px; top: 43px; color: rgb(0, 0, 128); letter-spacing: -0.5px;">Hints</div>





</div>


</body></html>
